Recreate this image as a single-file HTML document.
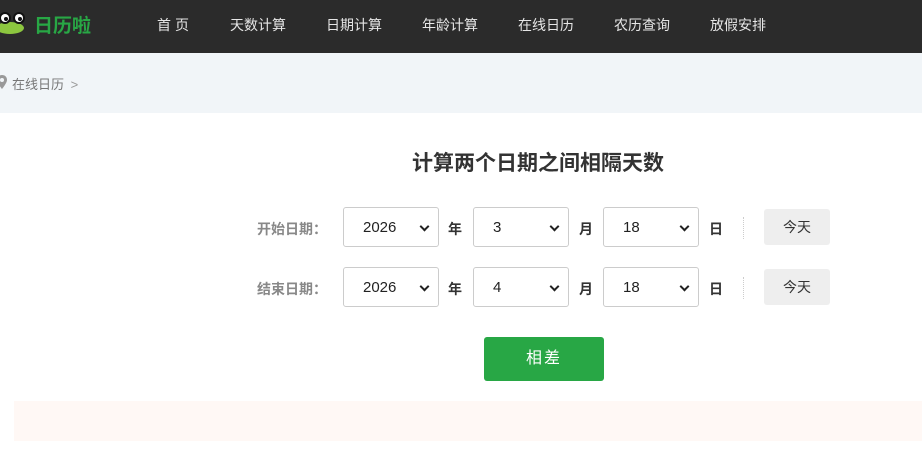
<!DOCTYPE html>
<html><head><meta charset="utf-8"><style>
*{margin:0;padding:0;box-sizing:border-box}
body{width:922px;height:454px;overflow:hidden;background:#fff;font-family:"Liberation Sans","Noto Sans CJK SC",sans-serif;position:relative}
.a{position:absolute}
.hd{left:0;top:0;width:922px;height:53px;background:#2b2b2b}
.nav{top:15px;color:#e6e6e6;font-size:14px;transform:translateX(-50%);white-space:nowrap}
.bc{left:0;top:53px;width:922px;height:60px;background:#f1f5f8}
.sel{width:96px;height:40px;border:1px solid #ccc;border-radius:3px;background:#fff;font-size:15px;color:#222;padding-left:19px;line-height:40px}
.sel:after{content:"";position:absolute;right:10px;top:15px;width:5px;height:5px;border-right:2px solid #222;border-bottom:2px solid #222;transform:rotate(45deg)}
.lb{font-size:14px;font-weight:bold;color:#333}
.gl{font-size:14px;font-weight:bold;color:#888}
.td{width:66px;height:36px;background:#eee;border-radius:3px;font-size:14px;color:#333;text-align:center;line-height:36px}
</style></head><body>
<div class="a hd"></div>
<svg class="a" style="left:0;top:9px" width="26" height="26" viewBox="0 0 26 26"><ellipse cx="10" cy="19" rx="14" ry="6" fill="#8cc63f"/><circle cx="5" cy="9" r="6" fill="#111"/><circle cx="19" cy="9" r="6" fill="#111"/><circle cx="5" cy="9" r="4" fill="#fff"/><circle cx="19" cy="9" r="4" fill="#fff"/><circle cx="6" cy="10" r="2" fill="#111"/><circle cx="20" cy="10" r="2" fill="#111"/></svg>
<div class="a" style="left:34px;top:11px;font-size:19px;font-weight:bold;color:#28a745">日历啦</div>
<div class="a nav" style="left:173px">首 页</div>
<div class="a nav" style="left:258px">天数计算</div>
<div class="a nav" style="left:354px">日期计算</div>
<div class="a nav" style="left:450px">年龄计算</div>
<div class="a nav" style="left:546px">在线日历</div>
<div class="a nav" style="left:642px">农历查询</div>
<div class="a nav" style="left:738px">放假安排</div>
<div class="a bc"></div>
<svg class="a" style="left:-3px;top:75px" width="10" height="14" viewBox="0 0 10 14"><path d="M5 0C2 0 0 2 0 5c0 3 5 9 5 9s5-6 5-9c0-3-2-5-5-5z" fill="#999"/><circle cx="5" cy="5" r="2" fill="#f1f5f8"/></svg>
<div class="a" style="left:12px;top:74px;font-size:13px;color:#777">在线日历 <span style="margin-left:3px;color:#999">&gt;</span></div>
<div class="a" style="left:412px;top:147px;font-size:21px;font-weight:bold;color:#333">计算两个日期之间相隔天数</div>
<div class="a gl" style="left:257px;top:219px">开始日期：</div>
<div class="a sel" style="left:343px;top:207px">2026</div>
<div class="a lb" style="left:448px;top:219px">年</div>
<div class="a sel" style="left:473px;top:207px">3</div>
<div class="a lb" style="left:579px;top:219px">月</div>
<div class="a sel" style="left:603px;top:207px">18</div>
<div class="a lb" style="left:709px;top:219px">日</div>
<div class="a" style="left:743px;top:217px;height:22px;border-left:1px dotted #ccc"></div>
<div class="a td" style="left:764px;top:209px">今天</div>
<div class="a gl" style="left:257px;top:279px">结束日期：</div>
<div class="a sel" style="left:343px;top:267px">2026</div>
<div class="a lb" style="left:448px;top:279px">年</div>
<div class="a sel" style="left:473px;top:267px">4</div>
<div class="a lb" style="left:579px;top:279px">月</div>
<div class="a sel" style="left:603px;top:267px">18</div>
<div class="a lb" style="left:709px;top:279px">日</div>
<div class="a" style="left:743px;top:277px;height:22px;border-left:1px dotted #ccc"></div>
<div class="a td" style="left:764px;top:269px">今天</div>
<div class="a" style="left:484px;top:337px;width:120px;height:44px;background:#28a745;border-radius:3px;color:#fff;font-size:16px;text-align:center;line-height:44px;letter-spacing:2px">相差</div>
<div class="a" style="left:14px;top:401px;width:908px;height:40px;background:#fff8f5"></div>
</body></html>
